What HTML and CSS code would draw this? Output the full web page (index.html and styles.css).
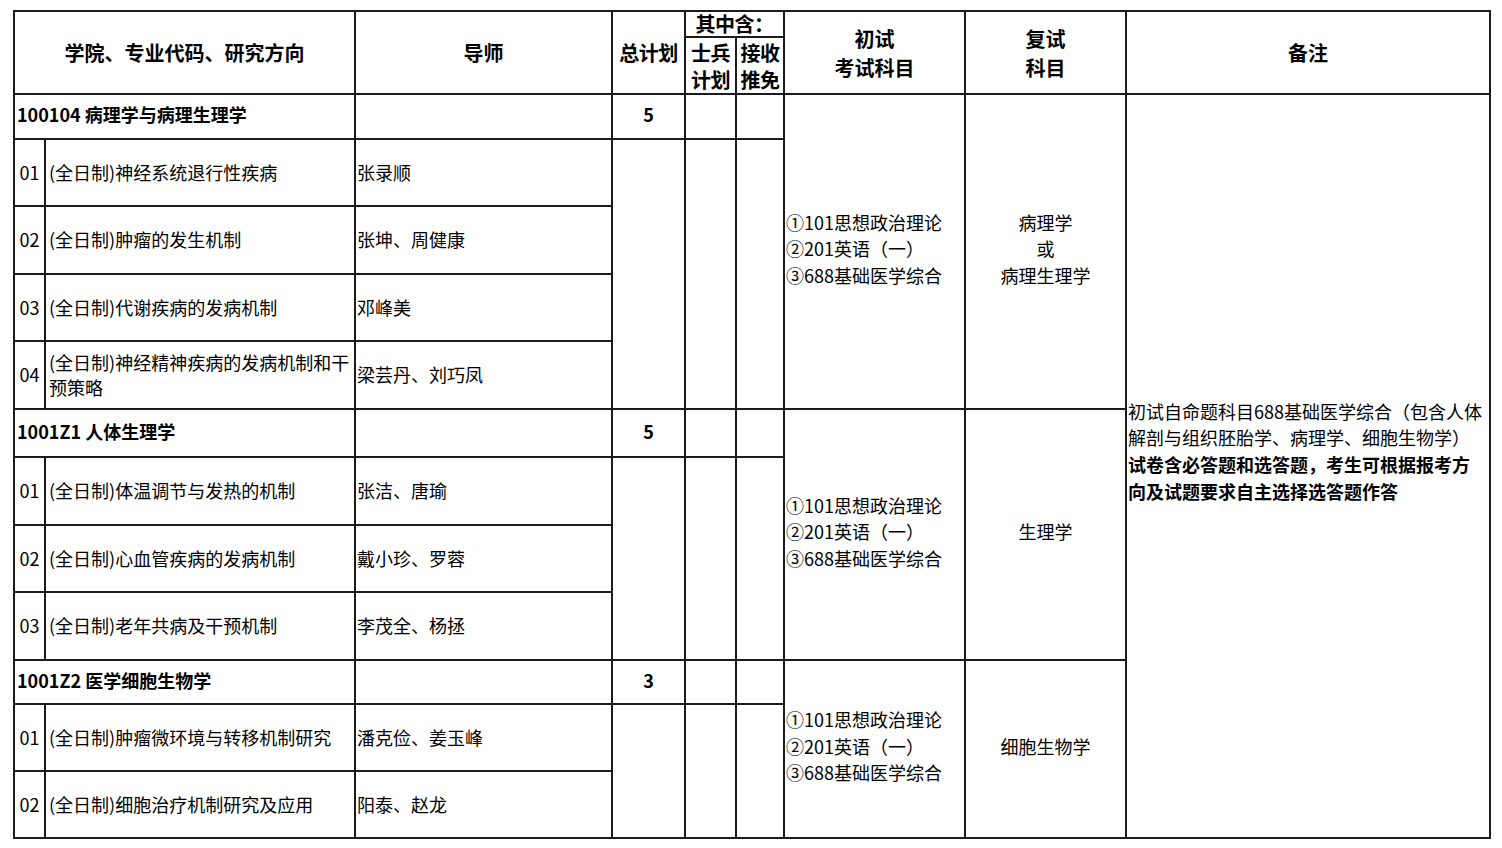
FILE: index.html
```html
<!DOCTYPE html>
<html lang="zh-CN">
<head>
<meta charset="utf-8">
<title>招生目录</title>
<link rel="stylesheet" href="styles.css">
</head>
<body>
<table class="plan">
  <colgroup>
    <col class="c-num">
    <col class="c-dir">
    <col class="c-tutor">
    <col class="c-total">
    <col class="c-soldier">
    <col class="c-push">
    <col class="c-exam1">
    <col class="c-exam2">
    <col class="c-note">
  </colgroup>
  <thead>
    <tr class="h-a">
      <th colspan="2" rowspan="2">学院、专业代码、研究方向</th>
      <th rowspan="2">导师</th>
      <th rowspan="2" class="tight">总计划</th>
      <th colspan="2" class="tight sub">其中含：</th>
      <th rowspan="2">初试<br>考试科目</th>
      <th rowspan="2">复试<br>科目</th>
      <th rowspan="2">备注</th>
    </tr>
    <tr class="h-b">
      <th class="tight pair">士兵<br>计划</th>
      <th class="tight pair">接收<br>推免</th>
    </tr>
  </thead>
  <tbody>
    <tr class="sec s1">
      <td colspan="2" class="label">100104 病理学与病理生理学</td>
      <td></td>
      <td class="count">5</td>
      <td></td>
      <td></td>
      <td rowspan="5" class="exam">①101思想政治理论<br>②201英语（一）<br>③688基础医学综合</td>
      <td rowspan="5" class="retest">病理学<br>或<br>病理生理学</td>
      <td rowspan="12" class="note">初试自命题科目688基础医学综合（包含人体<br>解剖与组织胚胎学、病理学、细胞生物学）<br><b>试卷含必答题和选答题，考生可根据报考方<br>向及试题要求自主选择选答题作答</b></td>
    </tr>
    <tr class="dir">
      <td class="num">01</td>
      <td class="text">(全日制)神经系统退行性疾病</td>
      <td class="tutor">张录顺</td>
      <td rowspan="4"></td>
      <td rowspan="4"></td>
      <td rowspan="4"></td>
    </tr>
    <tr class="dir d2">
      <td class="num">02</td>
      <td class="text">(全日制)肿瘤的发生机制</td>
      <td class="tutor">张坤、周健康</td>
    </tr>
    <tr class="dir">
      <td class="num">03</td>
      <td class="text">(全日制)代谢疾病的发病机制</td>
      <td class="tutor">邓峰美</td>
    </tr>
    <tr class="dir d2">
      <td class="num">04</td>
      <td class="text wrap">(全日制)神经精神疾病的发病机制和干<br>预策略</td>
      <td class="tutor">梁芸丹、刘巧凤</td>
    </tr>
    <tr class="sec s2">
      <td colspan="2" class="label">1001Z1 人体生理学</td>
      <td></td>
      <td class="count">5</td>
      <td></td>
      <td></td>
      <td rowspan="4" class="exam">①101思想政治理论<br>②201英语（一）<br>③688基础医学综合</td>
      <td rowspan="4" class="retest">生理学</td>
    </tr>
    <tr class="dir d2">
      <td class="num">01</td>
      <td class="text">(全日制)体温调节与发热的机制</td>
      <td class="tutor">张洁、唐瑜</td>
      <td rowspan="3"></td>
      <td rowspan="3"></td>
      <td rowspan="3"></td>
    </tr>
    <tr class="dir">
      <td class="num">02</td>
      <td class="text">(全日制)心血管疾病的发病机制</td>
      <td class="tutor">戴小珍、罗蓉</td>
    </tr>
    <tr class="dir d2">
      <td class="num">03</td>
      <td class="text">(全日制)老年共病及干预机制</td>
      <td class="tutor">李茂全、杨拯</td>
    </tr>
    <tr class="sec s3">
      <td colspan="2" class="label">1001Z2 医学细胞生物学</td>
      <td></td>
      <td class="count">3</td>
      <td></td>
      <td></td>
      <td rowspan="3" class="exam">①101思想政治理论<br>②201英语（一）<br>③688基础医学综合</td>
      <td rowspan="3" class="retest">细胞生物学</td>
    </tr>
    <tr class="dir">
      <td class="num">01</td>
      <td class="text">(全日制)肿瘤微环境与转移机制研究</td>
      <td class="tutor">潘克俭、姜玉峰</td>
      <td rowspan="2"></td>
      <td rowspan="2"></td>
      <td rowspan="2"></td>
    </tr>
    <tr class="dir">
      <td class="num">02</td>
      <td class="text">(全日制)细胞治疗机制研究及应用</td>
      <td class="tutor">阳泰、赵龙</td>
    </tr>
  </tbody>
</table>
</body>
</html>
```
FILE: styles.css
```css
html, body {
  margin: 0;
  padding: 0;
  background: #ffffff;
}

body {
  font-family: "Noto Sans CJK SC", "Noto Sans", sans-serif;
  color: #000000;
}

.plan {
  border-collapse: collapse;
  table-layout: fixed;
  width: 1478px;
  margin: 10px 0 0 13px;
  font-size: 18px;
  line-height: 26.5px;
  font-weight: 400;
}

.c-num { width: 31px; }
.c-dir { width: 310px; }
.c-tutor { width: 257px; }
.c-total { width: 73px; }
.c-soldier { width: 51px; }
.c-push { width: 48px; }
.c-exam1 { width: 181px; }
.c-exam2 { width: 161px; }
.c-note { width: 364px; }

.plan th,
.plan td {
  border: 2px solid #1c1c1c;
  padding: 0;
  vertical-align: middle;
}

.plan th {
  font-size: 20px;
  font-weight: 700;
  line-height: 29px;
  text-align: center;
}

.plan th.tight {
  white-space: nowrap;
  letter-spacing: -0.5px;
}

.plan th.sub {
  line-height: 22px;
}

.plan th.pair {
  line-height: 27px;
}

.h-a { height: 26px; }
.h-b { height: 57px; }

.s1 { height: 45px; }
.s2 { height: 48px; }
.s3 { height: 44px; }

.dir { height: 67px; }
.dir.d2 { height: 68px; }

.plan td.label {
  padding: 0 0 4px 2px;
  font-weight: 700;
  text-align: left;
  white-space: nowrap;
}

.plan td.count {
  padding-bottom: 4px;
  font-weight: 700;
  text-align: center;
}

.plan td.num {
  padding-bottom: 1px;
  text-align: center;
}

.plan td.text {
  padding: 0 0 1px 3px;
  text-align: left;
  white-space: nowrap;
}

.plan td.tutor {
  padding: 0 0 1px 1px;
  text-align: left;
  white-space: nowrap;
}

.plan td.text.wrap {
  line-height: 25px;
}

.plan td.exam {
  padding: 0 0 6px 1px;
  text-align: left;
  white-space: nowrap;
}

.plan td.retest {
  padding-bottom: 6px;
  text-align: center;
}

.plan td.note {
  padding: 0 0 30px 1px;
  text-align: left;
  white-space: nowrap;
  line-height: 26.7px;
}

.note b {
  font-weight: 700;
}
```
